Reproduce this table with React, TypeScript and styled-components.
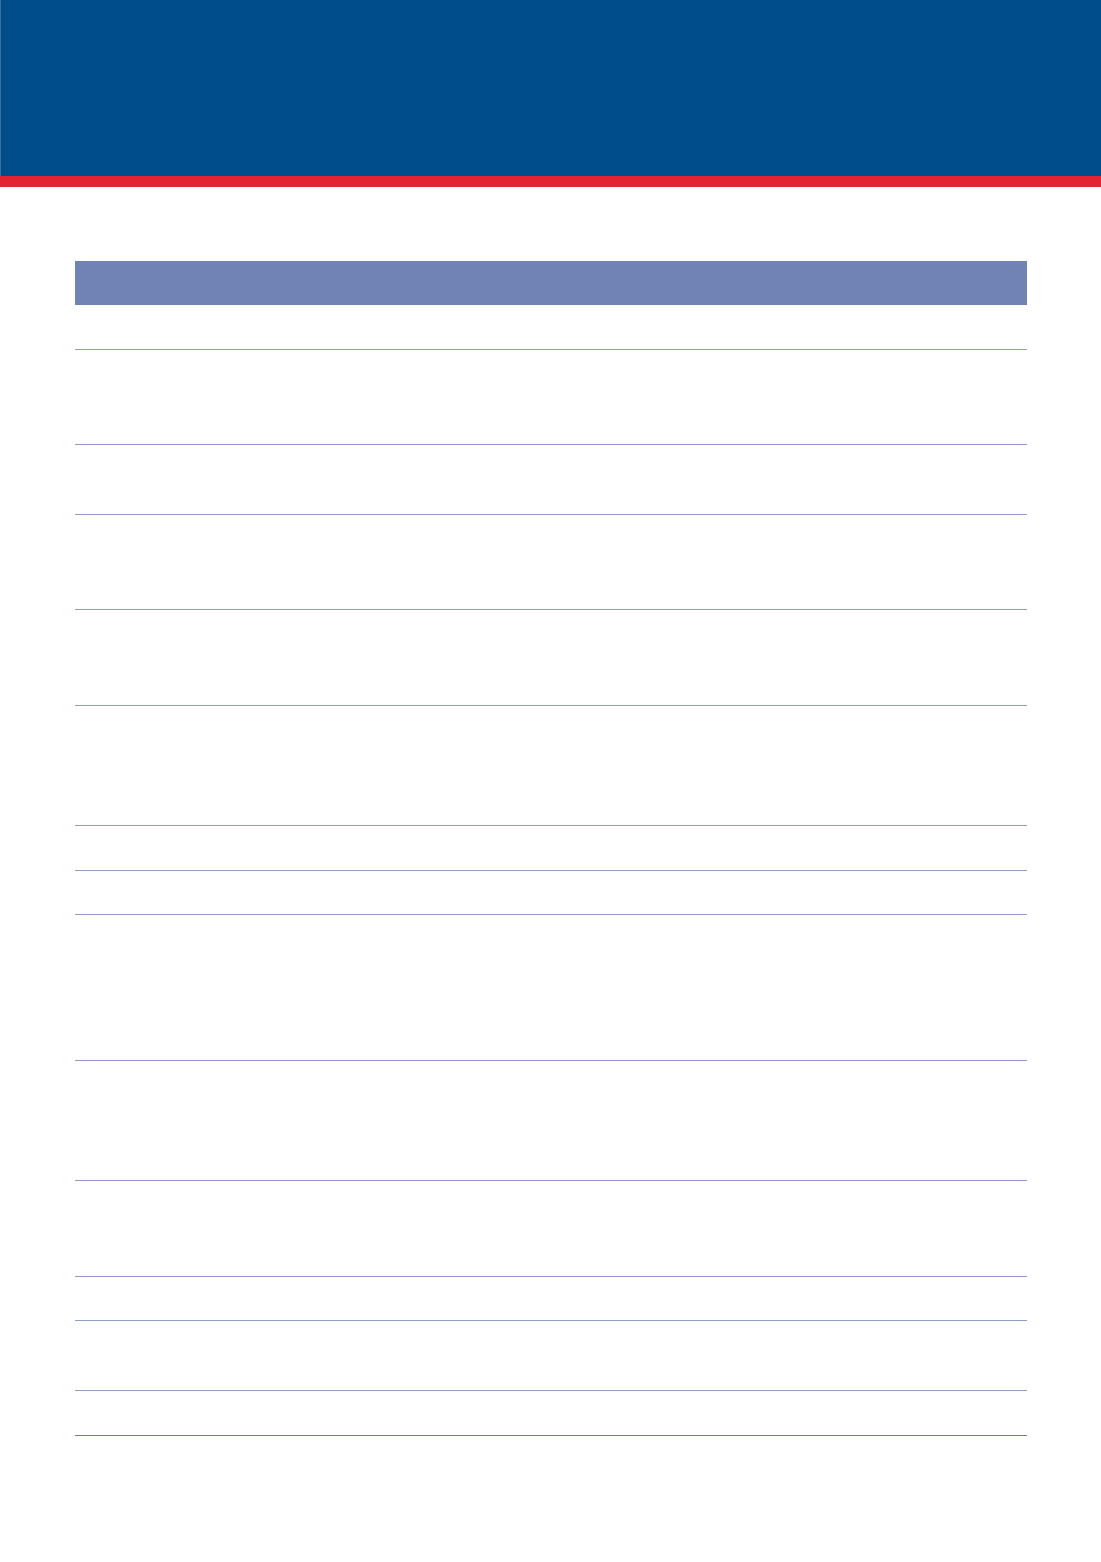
import React from "react";
import styled, { createGlobalStyle } from "styled-components";

const Global = createGlobalStyle`
  html, body { margin: 0; padding: 0; background: #ffffff; }
  body { font-family: "Liberation Sans", Arial, sans-serif; }
`;

const Page = styled.div`
  width: 1101px;
  min-height: 1562px;
  background: #ffffff;
  display: flex;
  flex-direction: column;
`;

const Banner = styled.header`
  height: 176px;
  background: #004d8c;
  border-left: 1px solid #3f6f9f;
  box-sizing: border-box;
`;

const Stripe = styled.div`
  height: 11px;
  background: #e32332;
`;

const Table = styled.div`
  margin: 74px 0 0 75px;
  width: 952px;
  display: flex;
  flex-direction: column;
`;

const HeadRow = styled.div`
  height: 44px;
  background: #6f83b4;
`;

const Row = styled.div<{ $h: number; $last?: boolean }>`
  box-sizing: border-box;
  height: ${(p) => p.$h}px;
  border-bottom: 1px solid ${(p) => (p.$last ? "#6c7cad" : "#8c9dc8")};
`;

const heights = [45, 95, 70, 95, 96, 120, 45, 44, 146, 120, 96, 44, 70, 45];

export default function App() {
  return (
    <Page>
      <Global />
      <Banner />
      <Stripe />
      <Table>
        <HeadRow />
        {heights.map((h, i) => (
          <Row key={i} $h={h} $last={i === heights.length - 1} />
        ))}
      </Table>
    </Page>
  );
}
